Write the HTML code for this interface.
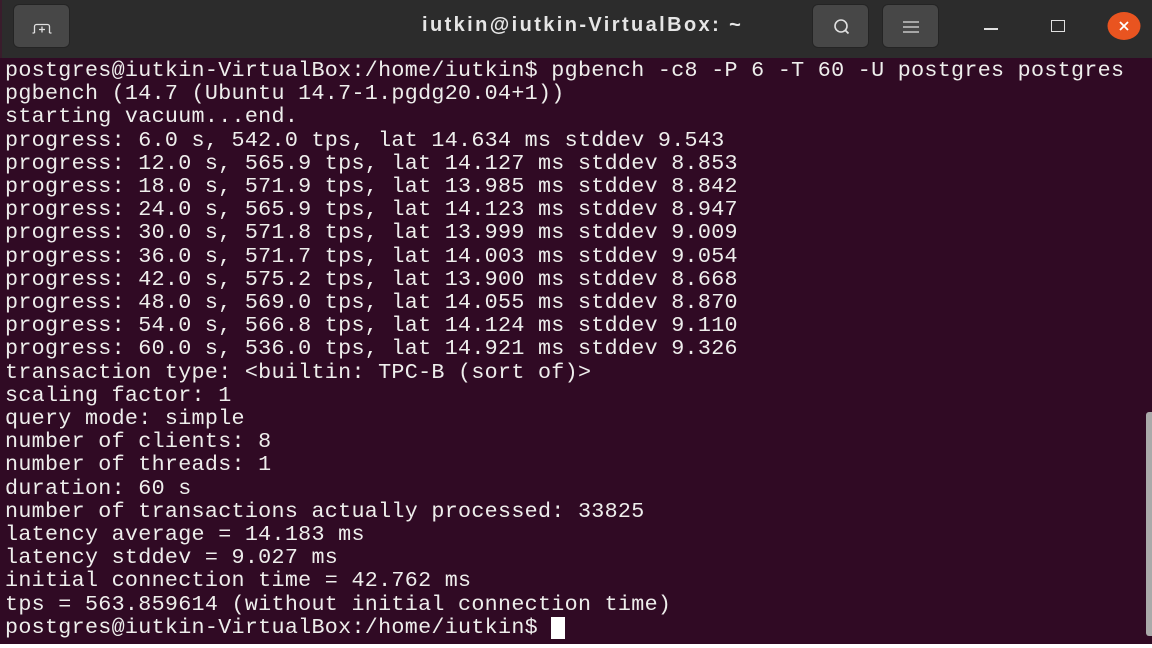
<!DOCTYPE html>
<html><head><meta charset="utf-8"><style>
html,body{margin:0;padding:0;width:1152px;height:648px;overflow:hidden;background:#fff}
#win{position:absolute;left:0;top:0;width:1152px;height:644px;background:#300a24}
#bar{position:absolute;left:0;top:0;width:1152px;height:58px;background:#2c2c2c;border-left:2px solid #3a1c2c;box-sizing:border-box}
.btn{position:absolute;top:4px;width:57px;height:44px;background:#474747;border-radius:6px;border:1px solid #242424;box-sizing:border-box}
#title{position:absolute;left:420px;width:326px;top:14px;text-align:left;color:#e6e6e6;font:bold 20px "Liberation Sans",sans-serif;letter-spacing:2.4px;white-space:nowrap}
pre{position:absolute;left:5px;top:59px;margin:0;font:21.7px/23.2px "Liberation Mono",monospace;color:#eeeeec;letter-spacing:0.31px}
#cur{position:absolute;left:551px;top:617px;width:14px;height:22px;background:#fff}
#sb{position:absolute;left:1146px;top:412px;width:6px;height:224px;background:#aaa;border-radius:3px 0 0 3px}
</style></head><body>
<div id="win">
<div id="bar">
 <div class="btn" style="left:11px"><svg width="57" height="44" viewBox="0 0 57 44"><path d="M20.5 28V21.5a2 2 0 0 1 2-2h11a2 2 0 0 1 2 2V28 M18.5 28h2 M35.5 28h2 M28 21.5v6 M25 24.5h6" stroke="#e0e0e0" stroke-width="1.3" fill="none"/></svg></div>
 <div id="title">iutkin@iutkin-VirtualBox: ~</div>
 <div class="btn" style="left:810px"><svg width="57" height="44" viewBox="0 0 57 44"><circle cx="28" cy="21" r="6" stroke="#e0e0e0" stroke-width="1.6" fill="none"/><path d="M32.5 25.5l3 3" stroke="#e0e0e0" stroke-width="1.8"/></svg></div>
 <div class="btn" style="left:880px"><svg width="57" height="44" viewBox="0 0 57 44"><path d="M20 17h16M20 22h16M20 27h16" stroke="#e0e0e0" stroke-width="1.2"/></svg></div>
 <div style="position:absolute;left:982px;top:28px;width:14px;height:1.5px;background:#e0e0e0"></div>
 <div style="position:absolute;left:1049px;top:20px;width:12px;height:10px;border:1.5px solid #e0e0e0"></div>
 <svg style="position:absolute;left:1105px;top:12px" width="34" height="28" viewBox="0 0 34 28"><ellipse cx="17" cy="14" rx="16.5" ry="14" fill="#e95420"/><path d="M13 10l8 8M21 10l-8 8" stroke="#fff" stroke-width="1.8"/></svg>
</div>
<pre>postgres@iutkin-VirtualBox:/home/iutkin$ pgbench -c8 -P 6 -T 60 -U postgres postgres
pgbench (14.7 (Ubuntu 14.7-1.pgdg20.04+1))
starting vacuum...end.
progress: 6.0 s, 542.0 tps, lat 14.634 ms stddev 9.543
progress: 12.0 s, 565.9 tps, lat 14.127 ms stddev 8.853
progress: 18.0 s, 571.9 tps, lat 13.985 ms stddev 8.842
progress: 24.0 s, 565.9 tps, lat 14.123 ms stddev 8.947
progress: 30.0 s, 571.8 tps, lat 13.999 ms stddev 9.009
progress: 36.0 s, 571.7 tps, lat 14.003 ms stddev 9.054
progress: 42.0 s, 575.2 tps, lat 13.900 ms stddev 8.668
progress: 48.0 s, 569.0 tps, lat 14.055 ms stddev 8.870
progress: 54.0 s, 566.8 tps, lat 14.124 ms stddev 9.110
progress: 60.0 s, 536.0 tps, lat 14.921 ms stddev 9.326
transaction type: &lt;builtin: TPC-B (sort of)&gt;
scaling factor: 1
query mode: simple
number of clients: 8
number of threads: 1
duration: 60 s
number of transactions actually processed: 33825
latency average = 14.183 ms
latency stddev = 9.027 ms
initial connection time = 42.762 ms
tps = 563.859614 (without initial connection time)
postgres@iutkin-VirtualBox:/home/iutkin$ </pre>
<div id="cur"></div>
<div id="sb"></div>
</div>
</body></html>
